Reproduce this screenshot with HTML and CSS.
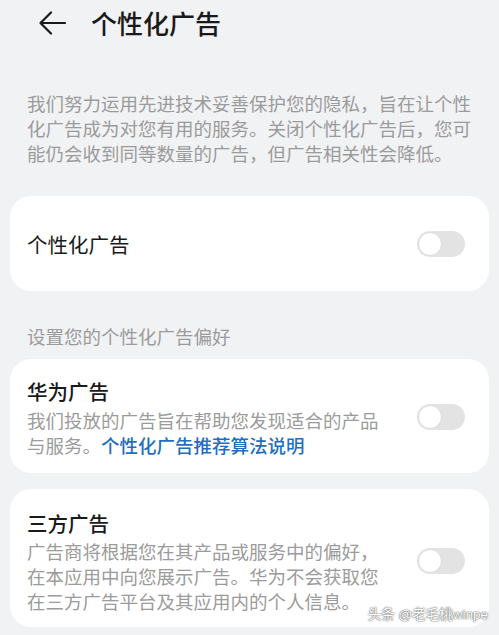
FILE: index.html
```html
<!DOCTYPE html>
<html>
<head>
<meta charset="UTF-8">
<title>个性化广告</title>
<link rel="stylesheet" href="styles.css">
</head>
<body>
<div class="header">
  <svg class="back" width="28" height="24" viewBox="0 0 28 24">
    <path d="M13 1.5 L2.5 12 L13 22.5 M2.5 12 H27" fill="none" stroke="#1b1b1b" stroke-width="2.2" stroke-linecap="round" stroke-linejoin="round"/>
  </svg>
  <h1 class="title">个性化广告</h1>
</div>

<p class="intro">我们努力运用先进技术妥善保护您的隐私，旨在让个性化广告成为对您有用的服务。关闭个性化广告后，您可能仍会收到同等数量的广告，但广告相关性会降低。</p>

<div class="card card-main">
  <div class="item-name">个性化广告</div>
  <span class="switch"></span>
</div>

<p class="section">设置您的个性化广告偏好</p>

<div class="card card-hw">
  <div class="item-text">
    <div class="item-title">华为广告</div>
    <div class="item-desc">我们投放的广告旨在帮助您发现适合的产品与服务。<a class="link">个性化广告推荐算法说明</a></div>
  </div>
  <span class="switch"></span>
</div>

<div class="card card-third">
  <div class="item-text">
    <div class="item-title">三方广告</div>
    <div class="item-desc">广告商将根据您在其产品或服务中的偏好，在本应用中向您展示广告。华为不会获取您在三方广告平台及其应用内的个人信息。</div>
  </div>
  <span class="switch"></span>
</div>

<div class="mark">头条 @老毛桃winpe</div>
</body>
</html>
```

FILE: styles.css
```css
body {
  margin: 0;
  background: #f1f2f4;
  font-family: "Noto Sans CJK SC", "Noto Sans", sans-serif;
  color: #1a1a1a;
  width: 499px;
  height: 635px;
  overflow: hidden;
  position: relative;
}

.header {
  display: flex;
  align-items: center;
  height: 46px;
  padding-left: 38px;
}

.back {
  display: block;
}

.title {
  margin: 0 0 0 25px;
  font-size: 26px;
  font-weight: 500;
  line-height: 46px;
}

.intro {
  margin: 45px 20px 0 27px;
  font-size: 18.5px;
  line-height: 25px;
  color: #9b9b9b;
}

.card {
  background: #fff;
  margin: 0 10px;
  border-radius: 21px;
  display: flex;
  align-items: center;
  padding: 0 24px 0 17px;
}

.card-main {
  margin-top: 30px;
  height: 95px;
}

.item-name {
  flex: 1;
  font-size: 20.5px;
}

.section {
  margin: 33px 0 10px 27px;
  font-size: 18.5px;
  line-height: 25px;
  color: #9b9b9b;
}

.card-hw {
  padding-top: 17px;
  padding-bottom: 15px;
}

.card-third {
  margin-top: 16px;
  padding-top: 19px;
  padding-bottom: 13px;
}

.item-text {
  width: 362px;
  flex: none;
}

.item-title {
  font-size: 20.5px;
  font-weight: 500;
  line-height: 30px;
}

.item-desc {
  margin-top: 1.5px;
  font-size: 18.5px;
  line-height: 25px;
  color: #9b9b9b;
}

.link {
  color: #1f6ec2;
  font-weight: 500;
}

.switch {
  margin-left: auto;
  width: 48px;
  height: 26px;
  border-radius: 13px;
  background: #e3e3e3;
  position: relative;
  flex: none;
}

.switch::before {
  content: "";
  position: absolute;
  left: 1px;
  top: 1px;
  width: 22px;
  height: 22px;
  border-radius: 50%;
  background: #fff;
  border: 1px solid #dcdcdc;
}

.mark {
  position: absolute;
  right: 11px;
  bottom: 12px;
  font-family: "Liberation Sans", "Noto Sans CJK SC", sans-serif;
  font-size: 13.5px;
  color: #fff;
  text-shadow: 0 0 1px #555, 0 0 2px #666;
}
```
